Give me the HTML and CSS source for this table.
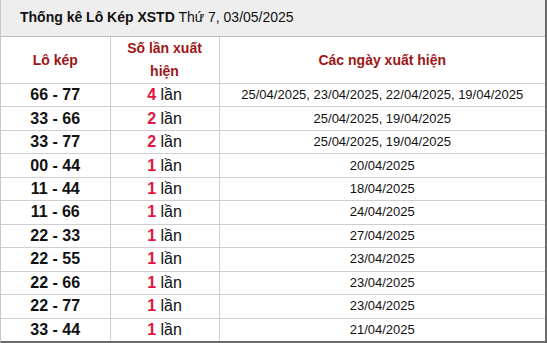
FILE: index.html
```html
<!DOCTYPE html>
<html lang="vi">
<head>
<meta charset="utf-8">
<link rel="stylesheet" href="styles.css">
</head>
<body>
<div class="box">
  <div class="title"><b>Thống kê Lô Kép XSTD</b> Thứ 7, 03/05/2025</div>
  <table class="tbl">
    <colgroup><col class="c1"><col class="c2"><col class="c3"></colgroup>
    <thead>
      <tr><th>Lô kép</th><th>Số lần xuất hiện</th><th>Các ngày xuất hiện</th></tr>
    </thead>
    <tbody>
      <tr><td class="pair">66 - 77</td><td class="cnt"><b>4</b> lần</td><td class="dates">25/04/2025, 23/04/2025, 22/04/2025, 19/04/2025</td></tr>
      <tr><td class="pair">33 - 66</td><td class="cnt"><b>2</b> lần</td><td class="dates">25/04/2025, 19/04/2025</td></tr>
      <tr><td class="pair">33 - 77</td><td class="cnt"><b>2</b> lần</td><td class="dates">25/04/2025, 19/04/2025</td></tr>
      <tr><td class="pair">00 - 44</td><td class="cnt"><b>1</b> lần</td><td class="dates">20/04/2025</td></tr>
      <tr><td class="pair">11 - 44</td><td class="cnt"><b>1</b> lần</td><td class="dates">18/04/2025</td></tr>
      <tr><td class="pair">11 - 66</td><td class="cnt"><b>1</b> lần</td><td class="dates">24/04/2025</td></tr>
      <tr><td class="pair">22 - 33</td><td class="cnt"><b>1</b> lần</td><td class="dates">27/04/2025</td></tr>
      <tr><td class="pair">22 - 55</td><td class="cnt"><b>1</b> lần</td><td class="dates">23/04/2025</td></tr>
      <tr><td class="pair">22 - 66</td><td class="cnt"><b>1</b> lần</td><td class="dates">23/04/2025</td></tr>
      <tr><td class="pair">22 - 77</td><td class="cnt"><b>1</b> lần</td><td class="dates">23/04/2025</td></tr>
      <tr><td class="pair">33 - 44</td><td class="cnt"><b>1</b> lần</td><td class="dates">21/04/2025</td></tr>
    </tbody>
  </table>
</div>
</body>
</html>
```
FILE: styles.css
```css
html, body {
  margin: 0;
  padding: 0;
  background: #fff;
}
.box {
  width: 547px;
  height: 343px;
  box-sizing: border-box;
  border-left: 1px solid #c8c8c8;
  border-right: 2px solid #6a6a6a;
  border-bottom: 2px solid #6a6a6a;
  font-family: "Liberation Sans", Arial, sans-serif;
  color: #111;
  display: flex;
  flex-direction: column;
}
.title {
  height: 37px;
  box-sizing: border-box;
  background: #efeeee;
  border-bottom: 1px solid #bdbdbd;
  padding-left: 19px;
  font-size: 14px;
  line-height: 35px;
}
.tbl {
  width: 100%;
  flex: 1;
  border-collapse: collapse;
  table-layout: fixed;
  border-style: hidden;
}
.c1 { width: 109px; }
.c2 { width: 109px; }
.tbl th, .tbl td {
  border: 1px solid #cfcfcf;
  text-align: center;
  padding: 0;
}
.tbl th {
  height: 45px;
  font-size: 14px;
  line-height: 23px;
  color: #9e1616;
  font-weight: bold;
  padding: 0 14px;
}
.tbl td {
  height: 22.45px;
  line-height: 20px;
}
.pair {
  font-weight: bold;
  font-size: 16px;
}
.cnt {
  font-size: 16px;
}
.cnt b {
  color: #e2173e;
}
.dates {
  font-size: 13px;
}
```
